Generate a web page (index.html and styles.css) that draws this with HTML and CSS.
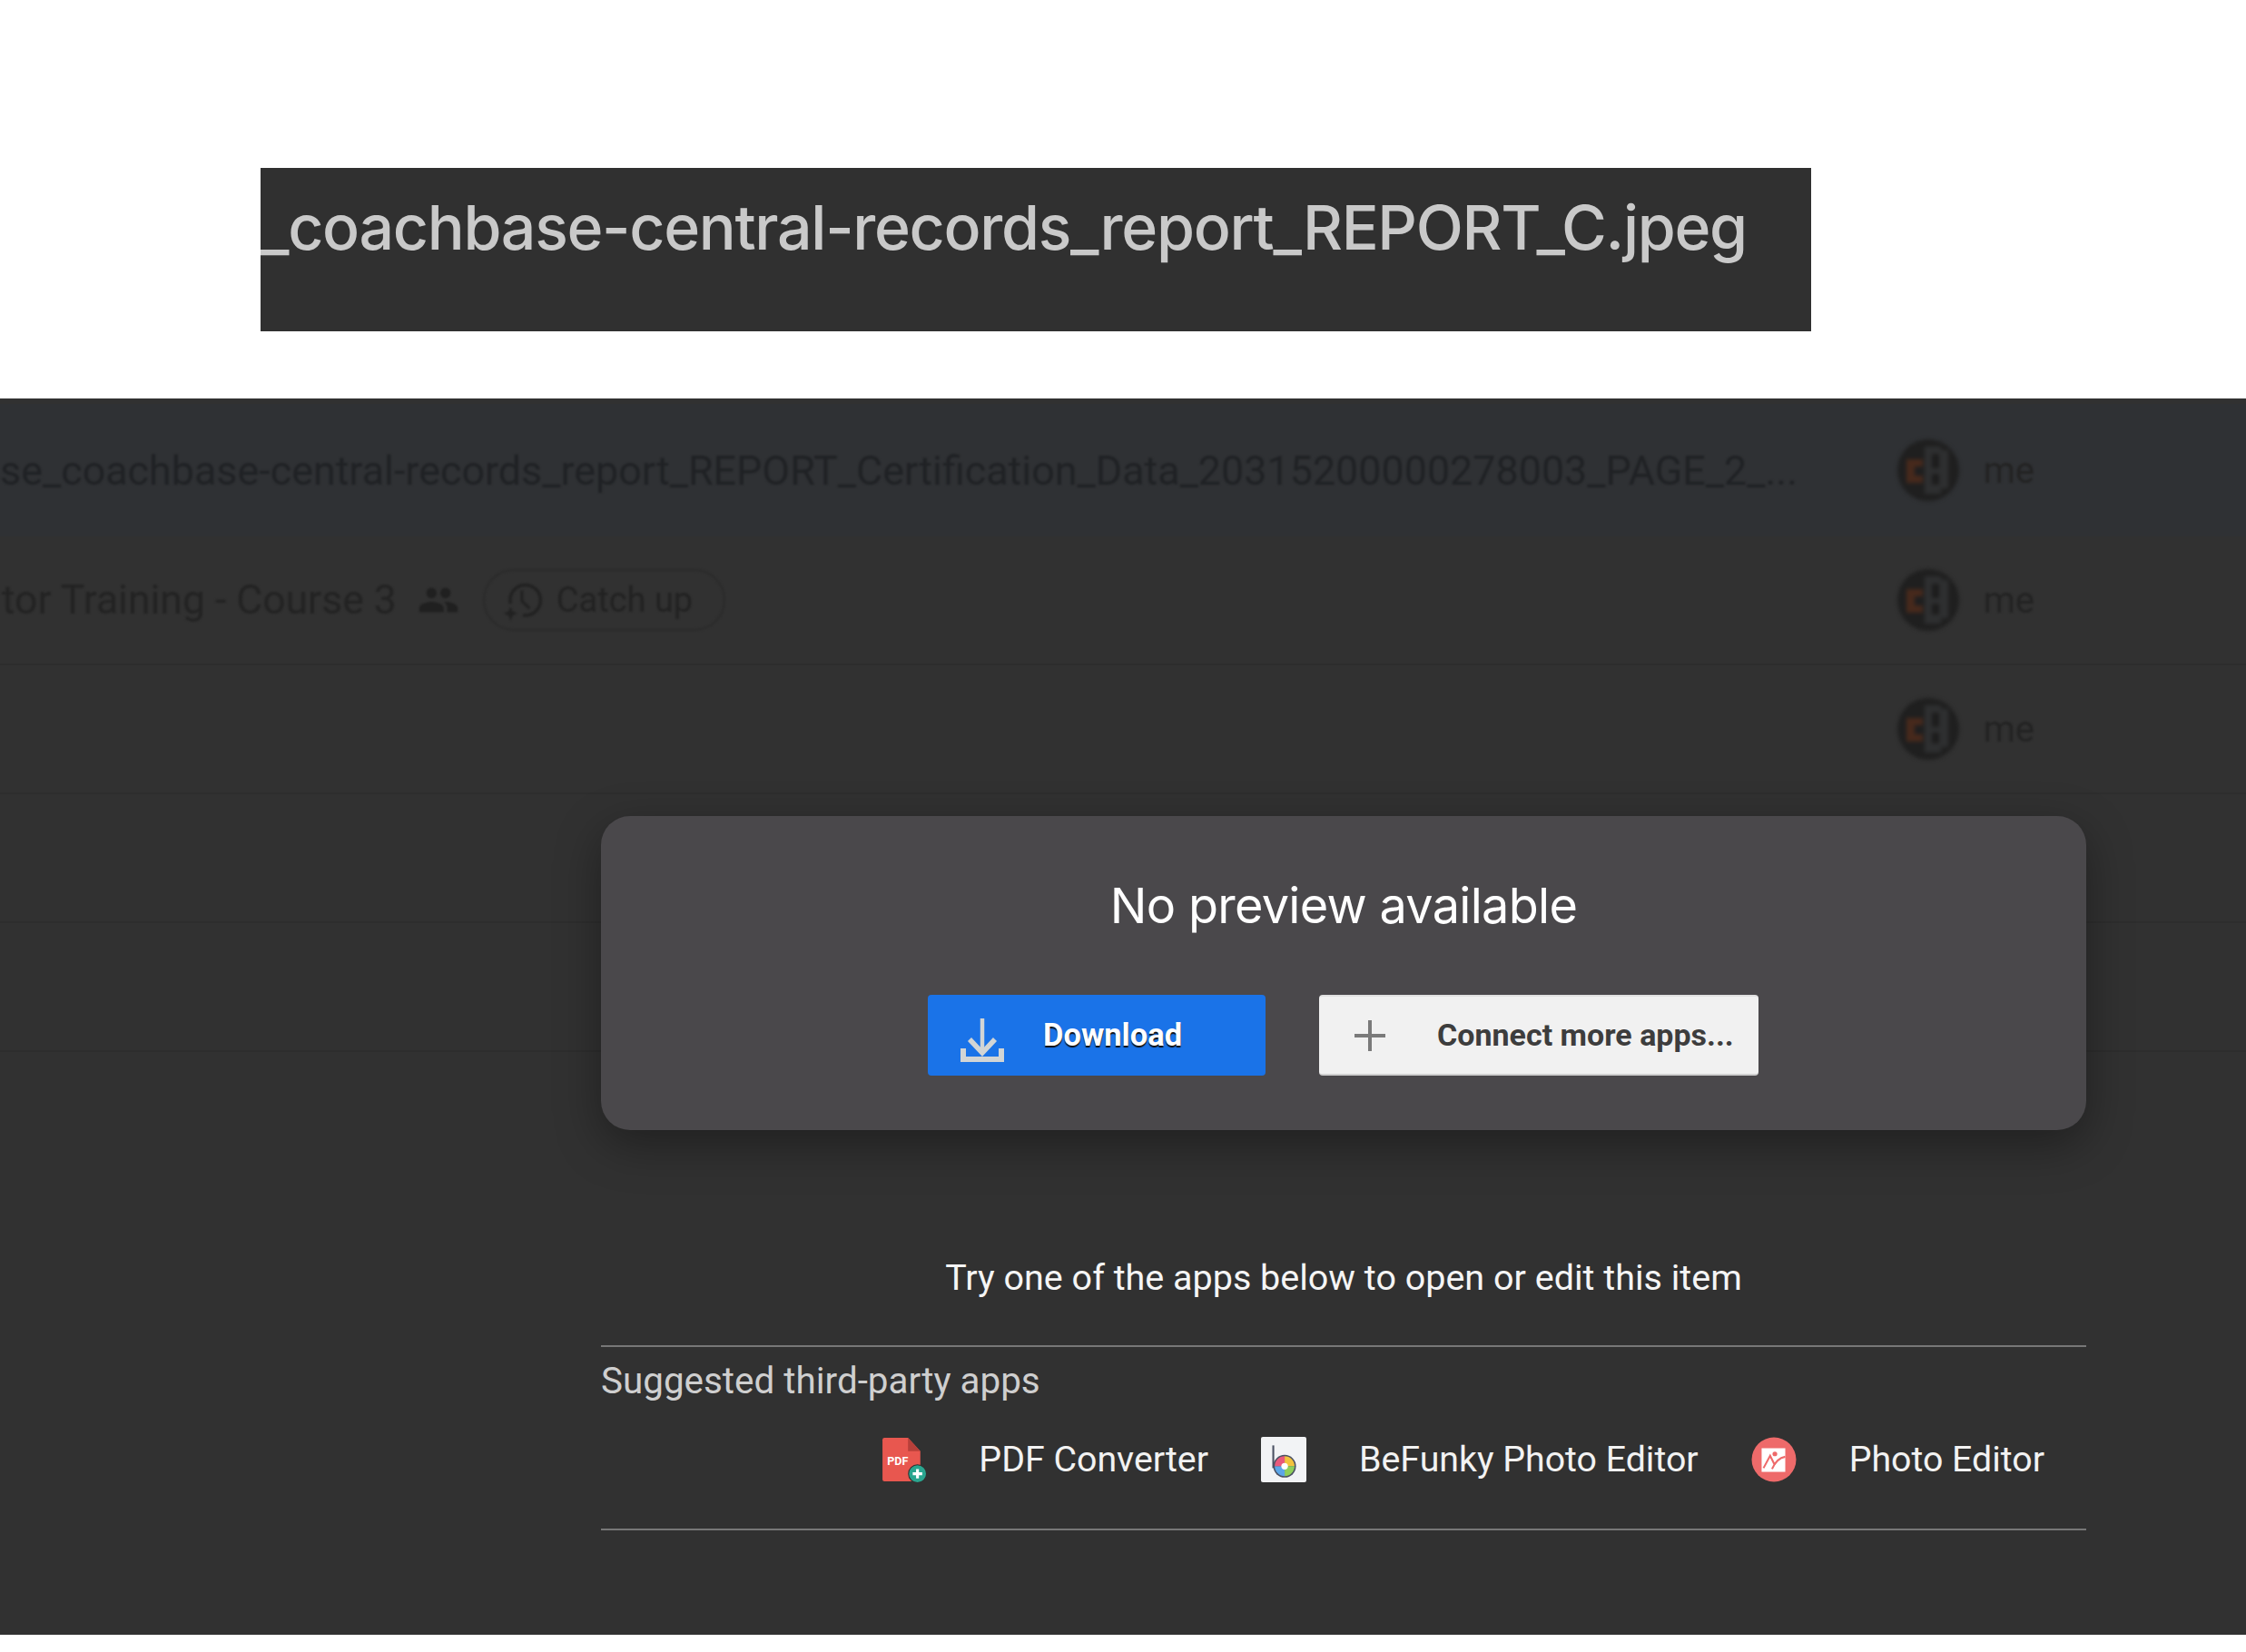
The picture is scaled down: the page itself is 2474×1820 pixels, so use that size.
FILE: index.html
```html
<!DOCTYPE html>
<html lang="en">
<head>
<meta charset="utf-8">
<title>No preview available</title>
<link rel="stylesheet" href="styles.css">
</head>
<body>
<header class="titlebar"><span class="title">_coachbase-central-records_report_REPORT_C.jpeg</span></header>
<main class="drive">
  <section class="rows">
    <div class="row row-selected">
      <div class="name name-first">se_coachbase-central-records_report_REPORT_Certification_Data_20315200000278003_PAGE_2_...</div>
      <div class="owner">
        <svg class="avatar" viewBox="0 0 68 68"><circle cx="34" cy="34" r="34" fill="#1f1f1f"/><path d="M10 22h18v8h-9v10h9v8H10z" fill="#47291c"/><path d="M30 8h18v4h8v42h-8v6H30z" fill="#2e2f30"/><path d="M38 16h8v16h-8zM38 38h8v12h-8z" fill="#1d1d1d"/></svg>
        <span class="me">me</span>
      </div>
    </div>
    <div class="row">
      <div class="name name-second">
        <span>tor Training - Course 3</span>
        <svg class="people" viewBox="0 0 24 24"><path fill="currentColor" d="M16 11a3 3 0 1 0 0-6.010A3 3 0 0 0 16 11zm-8 0a3 3 0 1 0 0-6.010A3 3 0 0 0 8 11zm0 2c-2.330 0-7 1.170-7 3.500V19h14v-2.500C15 14.170 10.330 13 8 13zm8 0c-.290 0-.620.020-.970.050C16.190 13.890 17 15.020 17 16.500V19h6v-2.500c0-2.330-4.670-3.500-7-3.500z"/></svg>
        <span class="chip">
          <svg class="chip-icon" viewBox="0 0 44 44"><path d="M9 26A16 16 0 1 1 22 38" fill="none" stroke="currentColor" stroke-width="3.400"/><path d="M21 12v11l8 8" fill="none" stroke="currentColor" stroke-width="3"/><path d="M9 29l2.200 5 4.800 2.200-4.800 2.200L9 44l-2.200-5.600L2 36.200l4.800-2.200z" fill="currentColor"/></svg>
          Catch up
        </span>
      </div>
      <div class="owner">
        <svg class="avatar" viewBox="0 0 68 68"><circle cx="34" cy="34" r="34" fill="#1f1f1f"/><path d="M10 22h18v8h-9v10h9v8H10z" fill="#47291c"/><path d="M30 8h18v4h8v42h-8v6H30z" fill="#2e2f30"/><path d="M38 16h8v16h-8zM38 38h8v12h-8z" fill="#1d1d1d"/></svg>
        <span class="me">me</span>
      </div>
    </div>
    <div class="row">
      <div class="name"></div>
      <div class="owner">
        <svg class="avatar" viewBox="0 0 68 68"><circle cx="34" cy="34" r="34" fill="#1f1f1f"/><path d="M10 22h18v8h-9v10h9v8H10z" fill="#47291c"/><path d="M30 8h18v4h8v42h-8v6H30z" fill="#2e2f30"/><path d="M38 16h8v16h-8zM38 38h8v12h-8z" fill="#1d1d1d"/></svg>
        <span class="me">me</span>
      </div>
    </div>
    <div class="row"></div>
    <div class="row"></div>
  </section>

  <section class="viewer">
    <div class="card">
      <h1 class="card-title">No preview available</h1>
      <div class="actions">
        <button class="btn btn-primary">
          <svg class="btn-icon" viewBox="0 0 48 48"><path d="M24 0v38" stroke="#d2d5d5" stroke-width="4.500"/><path d="M10 23l14 15 14-15" fill="none" stroke="#d2d5d5" stroke-width="5.500"/><path d="M3 33v12h42V33" fill="none" stroke="#d2d5d5" stroke-width="6"/></svg>
          <span class="btn-label">Download</span>
        </button>
        <button class="btn btn-secondary">
          <svg class="plus-icon" viewBox="0 0 36 36"><path d="M18 1v34M1 18h34" stroke="#7a7a7a" stroke-width="4"/></svg>
          <span class="btn-label">Connect more apps...</span>
        </button>
      </div>
    </div>
    <p class="hint">Try one of the apps below to open or edit this item</p>
    <div class="suggested">
      <div class="suggested-label">Suggested third-party apps</div>
      <div class="apps">
        <div class="app">
          <svg class="app-icon" viewBox="0 0 48 48"><path d="M2 3a2 2 0 0 1 2-2h25l13 14v30a2 2 0 0 1-2 2H4a2 2 0 0 1-2-2z" fill="#e8574f"/><path d="M29 1l13 14H29z" fill="#b8403a"/><text x="7" y="30" class="pdf-label">PDF</text><circle cx="39" cy="39" r="9.500" fill="#2aa58f" stroke="#303030" stroke-width="1"/><path d="M39 34v10M34 39h10" stroke="#fff" stroke-width="3"/></svg>
          <span class="app-name">PDF Converter</span>
        </div>
        <div class="app">
          <svg class="app-icon" viewBox="0 0 48 48"><rect width="48" height="48" rx="2" fill="#f2f3f5"/><path d="M13 9v24" stroke="#4a5063" stroke-width="2"/><circle cx="25" cy="31" r="12" fill="#4a5063"/><path d="M25 31V20.500A10.500 10.500 0 0 1 35.500 31z" fill="#f3c33d"/><path d="M25 31h10.500A10.500 10.500 0 0 1 25 41.500z" fill="#8fcf5a"/><path d="M25 31v10.500A10.500 10.500 0 0 1 14.500 31z" fill="#5ca6e8"/><path d="M25 31H14.500A10.500 10.500 0 0 1 25 20.500z" fill="#e9597c"/><circle cx="25" cy="31" r="3.500" fill="#fff"/></svg>
          <span class="app-name">BeFunky Photo Editor</span>
        </div>
        <div class="app">
          <svg class="app-icon" viewBox="0 0 48 48"><circle cx="24" cy="24" r="23.500" fill="#ee6a6a"/><rect x="11" y="12" width="25" height="25" fill="#fff"/><circle cx="25" cy="18" r="2.500" fill="#ee6a6a"/><path d="M13 33l7-13 5 10M22 34c3-7 8-12 14-13" fill="none" stroke="#ee6a6a" stroke-width="2"/></svg>
          <span class="app-name">Photo Editor</span>
        </div>
      </div>
    </div>
  </section>
</main>
</body>
</html>
```

FILE: styles.css
```css
* { box-sizing: border-box; }
html, body { margin: 0; padding: 0; }
body {
  width: 2474px;
  height: 1820px;
  background: #fff;
  overflow: hidden;
  padding-top: 185px;
  font-family: Roboto, "Liberation Sans", sans-serif;
}
.titlebar {
  margin-left: 287px;
  width: 1708px;
  height: 180px;
  background: #303030;
  color: #c9c9c9;
  padding-top: 29px;
  overflow: hidden;
}
.title {
  display: block;
  font-family: Inter, Roboto, sans-serif;
  font-size: 68px;
  font-weight: 500;
  letter-spacing: -1.3px;
  line-height: 72px;
  white-space: nowrap;
}
.drive {
  position: relative;
  margin-top: 74px;
  height: 1362px;
  background: #313131;
  overflow: hidden;
}
.rows { padding-top: 6px; }
.row {
  display: flex;
  align-items: center;
  justify-content: space-between;
  height: 142px;
  padding-right: 233px;
  border-bottom: 2px solid #2d2d2d;
  color: #222324;
}
.row-selected {
  height: 146px;
  background: #2f3134;
  border-bottom: 0;
  color: #202225;
}
.name {
  display: flex;
  align-items: center;
  flex: 1;
  min-width: 0;
  font-size: 44.5px;
  white-space: nowrap;
  filter: blur(1px);
}
.name-first { font-size: 44.85px; }
.name-second { padding-left: 2px; color: #232323; }
.people { width: 46px; height: 46px; margin-left: 23px; color: #202020; }
.chip {
  display: flex;
  align-items: center;
  gap: 14px;
  height: 68px;
  margin-left: 26px;
  padding: 0 34px 0 22px;
  border: 2px solid #2b2b2b;
  border-radius: 34px;
  font-size: 38px;
  color: #222;
}
.chip-icon { width: 46px; height: 46px; margin-left: -3px; }
.owner { display: flex; align-items: center; gap: 27px; }
.avatar { width: 68px; height: 68px; filter: blur(2px); }
.me { font-size: 40px; color: #232323; filter: blur(0.8px); }

.viewer {
  position: absolute;
  left: 662px;
  top: 460px;
  width: 1636px;
}
.card {
  height: 346px;
  padding-top: 62px;
  background: #4a484b;
  border-radius: 32px;
  box-shadow: 0 16px 50px rgba(0, 0, 0, .35);
}
.card-title {
  margin: 0;
  height: 74px;
  text-align: center;
  font-family: Inter, Roboto, sans-serif;
  font-size: 54px;
  letter-spacing: -0.7px;
  line-height: 74px;
  font-weight: 400;
  color: #fff;
}
.actions {
  display: flex;
  justify-content: flex-start;
  gap: 59px;
  margin-top: 61px;
  padding-left: 360px;
}
.btn {
  display: flex;
  align-items: center;
  height: 89px;
  border: 0;
  border-radius: 4px;
  font-family: Roboto, "Liberation Sans", sans-serif;
  font-size: 34px;
  font-weight: 700;
}
.btn-label { margin-bottom: 2px; }
.btn-primary {
  width: 372px;
  padding: 0 0 0 36px;
  background: #1a73e8;
  color: #fff;
  font-size: 34.5px;
  text-shadow: 0 2px 1px #111;
}
.btn-icon { width: 48px; height: 48px; margin: 10px 43px 0 0; }
.btn-secondary {
  width: 484px;
  padding: 0 0 0 38px;
  background: #f1f1f1;
  color: #3d3d3d;
  border-top: 2px solid #e0e0e0;
  border-bottom: 2px solid #cfcfcf;
}
.plus-icon { width: 36px; height: 36px; margin-right: 56px; }
.hint {
  margin: 140px 0 0;
  text-align: center;
  font-size: 39.5px;
  line-height: 46px;
  color: #f5f5f5;
}
.suggested {
  margin-top: 51px;
  border-top: 2px solid #777;
  border-bottom: 2px solid #777;
  height: 204px;
}
.suggested-label {
  margin-top: 15px;
  font-size: 40.4px;
  line-height: 46px;
  color: #cfcfcf;
}
.apps {
  display: flex;
  justify-content: flex-end;
  gap: 58px;
  margin-top: 38px;
  padding-right: 46px;
  font-size: 39.3px;
  line-height: 48px;
  color: #f2f2f2;
}
.app { display: flex; align-items: center; gap: 58px; }
.app-name { margin-bottom: 1px; }
.app-icon { width: 50px; height: 50px; }
.pdf-label { font: 700 12px Roboto, sans-serif; fill: #fff; }
```
